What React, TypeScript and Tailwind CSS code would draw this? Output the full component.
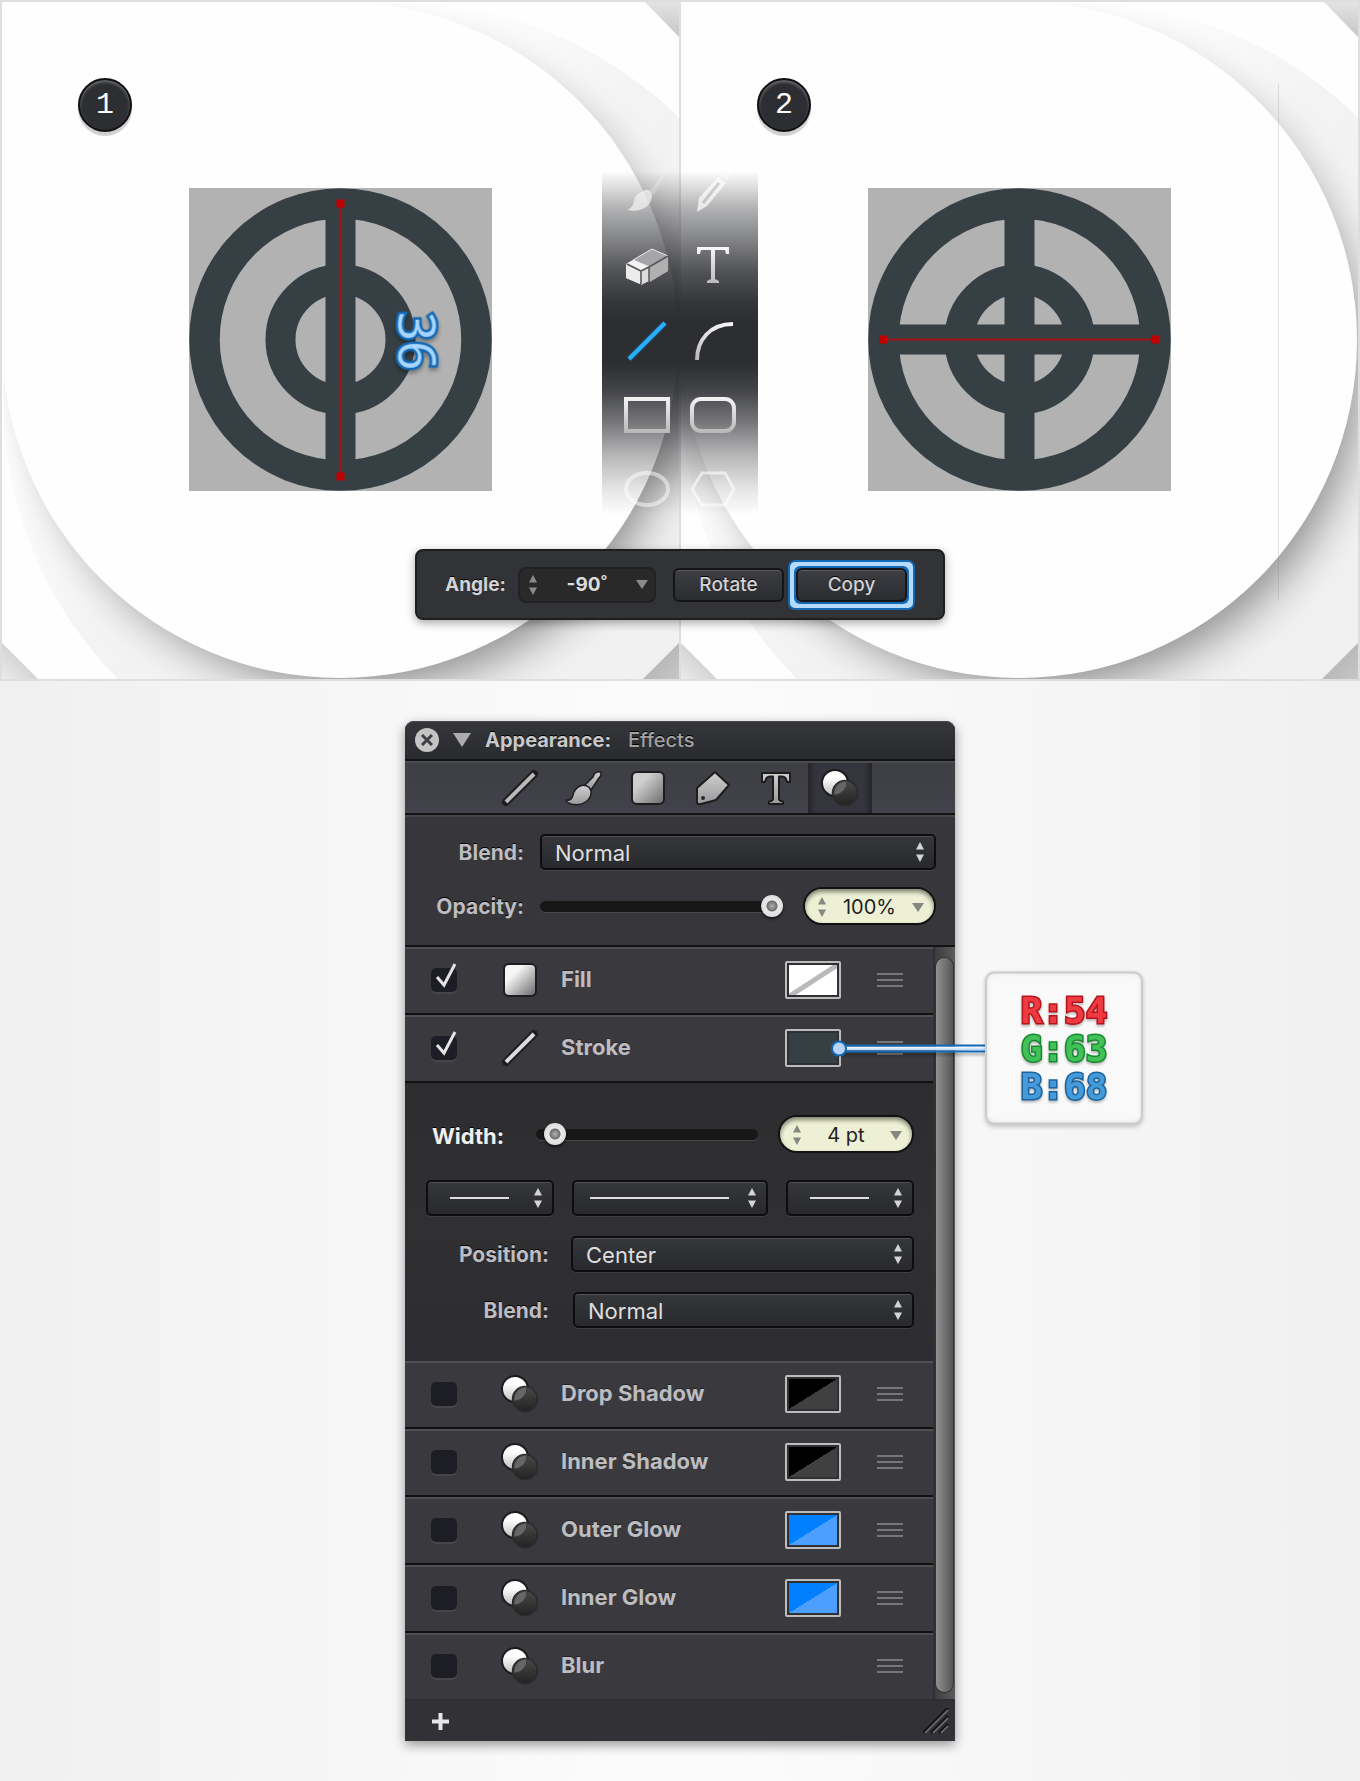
import React, { useState } from "react";

/* ---------- stage drawings ---------- */

function Stage({ id, crosshair }: { id: string; crosshair: boolean }) {
  const dark = "#363f44";
  return (
    <svg viewBox="0 0 677 677" className="block h-auto w-full" aria-hidden="true">
      <defs>
        <clipPath id={id + "-outer"}>
          <circle cx="398" cy="398" r="397" />
        </clipPath>
        <filter id={id + "-blur"} x="-20%" y="-20%" width="140%" height="140%">
          <feGaussianBlur stdDeviation="23" />
        </filter>
        <linearGradient id={id + "-ring"} x1="0" y1="0" x2="1" y2="1">
          <stop offset="0.28" stopColor="#fefefe" />
          <stop offset="0.46" stopColor="#f3f3f3" />
          <stop offset="1" stopColor="#f0f0f0" />
        </linearGradient>
        <linearGradient id={id + "-corner"} x1="0" y1="0" x2="0" y2="1">
          <stop offset="0" stopColor="#e3e3e3" />
          <stop offset="1" stopColor="#c6c6c6" />
        </linearGradient>
        <linearGradient id={id + "-cornerdark"} x1="0" y1="0" x2="1" y2="1">
          <stop offset="0.3" stopColor="#b4b4b4" />
          <stop offset="1" stopColor="#c6c6c6" />
        </linearGradient>
        <linearGradient id={id + "-left"} x1="1" y1="0" x2="0" y2="1">
          <stop offset="0.4" stopColor="#d0d0d0" />
          <stop offset="1" stopColor="#ececec" />
        </linearGradient>
      </defs>
      <rect width="677" height="677" fill="#fefefe" />
      <path d="M643 0H677V35Z" fill={`url(#${id}-corner)`} />
      <path d="M0 641V677H36Z" fill={`url(#${id}-left)`} />
      <g clipPath={`url(#${id}-outer)`}>
        <circle cx="398" cy="398" r="397" fill={`url(#${id}-ring)`} />
        <circle cx="355" cy="362" r="324" fill="#000" opacity="0.42" filter={`url(#${id}-blur)`} />
      </g>
      <path d="M677 641V677H641Z" fill={`url(#${id}-cornerdark)`} />
      <circle cx="338" cy="338" r="338" fill="#fefefe" />
      {crosshair && <path d="M597.5 82V598" stroke="#808080" strokeOpacity="0.22" />}

      <rect x="187" y="186" width="303" height="303" fill="#b2b2b2" />
      <circle cx="338.500" cy="337.500" r="136" fill="none" stroke={dark} strokeWidth="30.500" />
      <circle cx="338.500" cy="337.500" r="60" fill="none" stroke={dark} strokeWidth="30" />
      <path d="M338.500 190V485" stroke={dark} strokeWidth="30" />
      {crosshair ? (
        <g>
          <path d="M190 337.500H487" stroke={dark} strokeWidth="30" />
          <path d="M202 337.500H475" stroke="#a31317" strokeWidth="2" />
          <path d="M198 333.500h8v8h-8zM470 333.500h8v8h-8z" fill="#c00000" />
        </g>
      ) : (
        <g>
          <path d="M338.500 201V474" stroke="#a31317" strokeWidth="2" />
          <path d="M334.500 197.500h8v8h-8zM334.500 470.500h8v8h-8z" fill="#c00000" />
        </g>
      )}
    </svg>
  );
}

function StepBadge({ n }: { n: number }) {
  return (
    <span className="absolute left-[76px] top-[76px] flex size-[54px] items-center justify-center rounded-full border-2 border-[#111114] bg-[#2d2e32] font-['Liberation_Mono'] text-[30px] leading-none text-white shadow-[0_4px_1px_rgba(0,0,0,0.18),inset_0_2px_3px_rgba(255,255,255,0.3)]">
      {n}
    </span>
  );
}

/* ---------- tool palette ---------- */

const palette: { label: string; fade: string; art: React.ReactNode }[] = [
  {
    label: "Brush",
    fade: "opacity-70",
    art: (
      <g fill="#f6f6f6">
        <path d="M45 2 27 23l5 4Z" opacity="0.35" />
        <path d="M21 23c5-3 9 0 9 5 0 10-11 17-25 14 6-3 6-5 7-10 1-4 4-7 9-9Z" />
      </g>
    ),
  },
  {
    label: "Pen",
    fade: "opacity-70",
    art: (
      <g>
        <path d="M9 44 11 30 30 9l8 6-19 23Z" fill="#fff" />
        <path d="M15 35 31 15" stroke="#c9c9cb" strokeWidth="3" />
        <path d="M32 7 37 1l7 5-5 7Z" fill="#fff" opacity="0.5" />
      </g>
    ),
  },
  {
    label: "Eraser",
    fade: "opacity-100",
    art: (
      <g strokeLinejoin="round">
        <path d="m4 22 7-4 18-11 17 7v15L27 39 18 42 4 36Z" fill="#c9c9c9" />
        <path d="m11 18 19-11 16 7-18 11Z" fill="#a5a5a7" stroke="#e6e6e6" strokeWidth="1" />
        <path d="m27 25 19-11v15L28 40Z" fill="#b0b0b1" />
        <path d="m4 22 7-4 16 7-9 4Z" fill="#f4f4f4" />
        <path d="m4 23 14 6v13L4 36Z" fill="#ececec" />
        <path d="m19 29 8-4v14l-8 4Z" fill="#dcdcdc" />
        <path d="m5 22 14 7v13m0-13 8-4V39m0-14 19-11" fill="none" stroke="#55565a" strokeWidth="1.500" />
      </g>
    ),
  },
  {
    label: "Text",
    fade: "opacity-100",
    art: <path d="M9 5H41V12H38L37 8H27V37L31 39V41H19V39L23 37V8H13L12 12H9Z" fill="url(#paletteMetal)" />,
  },
  {
    label: "Line",
    fade: "opacity-100",
    art: (
      <g>
        <path d="M7 43 43 7" stroke="#1478c8" strokeWidth="6" opacity="0.45" />
        <path d="M7 43 43 7" stroke="#29aef7" strokeWidth="4" />
      </g>
    ),
  },
  {
    label: "Arc",
    fade: "opacity-100",
    art: <path d="M9 44C9 24 22 8 45 8" fill="none" stroke="url(#paletteMetal)" strokeWidth="4" />,
  },
  {
    label: "Rectangle",
    fade: "opacity-100",
    art: <rect x="4" y="9" width="42" height="32" fill="none" stroke="url(#paletteMetal)" strokeWidth="4" />,
  },
  {
    label: "Rounded rectangle",
    fade: "opacity-100",
    art: <rect x="4" y="9" width="42" height="32" rx="9" fill="none" stroke="url(#paletteMetal)" strokeWidth="4" />,
  },
  {
    label: "Ellipse",
    fade: "opacity-50",
    art: <ellipse cx="25" cy="25" rx="21" ry="16" fill="none" stroke="#fff" strokeWidth="4" />,
  },
  {
    label: "Polygon",
    fade: "opacity-60",
    art: <path d="M14 9H37L46 25 37 41H14L4 25Z" fill="none" stroke="#fff" strokeWidth="3" />,
  },
];

function ToolPalette() {
  return (
    <div className="absolute left-1/2 top-[154px] grid w-[156px] -translate-x-1/2 grid-cols-2 bg-[linear-gradient(to_bottom,rgba(45,46,50,0)_4%,rgba(45,46,50,0.36)_14%,rgba(45,46,50,0.6)_23%,rgba(45,46,50,0.82)_31%,rgba(45,46,50,0.97)_40%,rgb(45,46,50)_45%,rgb(45,46,50)_56%,rgba(45,46,50,0.9)_63%,rgba(45,46,50,0.65)_72%,rgba(45,46,50,0.34)_81%,rgba(45,46,50,0.12)_90%,rgba(45,46,50,0)_97%)] px-3">
      {palette.map((t) => (
        <button key={t.label} type="button" aria-label={t.label} className="flex h-[74px] items-center justify-center">
          <svg viewBox="0 0 50 50" className={"size-[50px] " + t.fade}>
            {t.art}
          </svg>
        </button>
      ))}
    </div>
  );
}

/* ---------- shared controls ---------- */

function UpDown({ className }: { className: string }) {
  return (
    <svg viewBox="0 0 10 22" className={"pointer-events-none h-[22px] w-[10px] shrink-0 " + className} fill="currentColor" aria-hidden="true">
      <path d="M5 1 9 8.500H1Z" />
      <path d="M5 21 9 13.500H1Z" />
    </svg>
  );
}

function Down({ className }: { className: string }) {
  return (
    <svg viewBox="0 0 12 9" className={"h-[9px] w-3 shrink-0 " + className} fill="currentColor" aria-hidden="true">
      <path d="M0 0H12L6 9Z" />
    </svg>
  );
}

function Select({ id, value, options }: { id: string; value: string; options: string[] }) {
  return (
    <div className="relative flex-1">
      <select
        id={id}
        defaultValue={value}
        className="block h-9 w-full appearance-none rounded-[5px] border-2 border-[#0d0d10] bg-linear-to-b from-[#36373b] to-[#28292d] pt-0.5 pr-10 pl-[13px] text-[22px] leading-7 text-[#dededf] shadow-[0_1px_0_rgba(255,255,255,0.08),inset_0_1px_0_rgba(255,255,255,0.14)]"
      >
        {options.map((o) => (
          <option key={o}>{o}</option>
        ))}
      </select>
      <UpDown className="absolute top-[7px] right-[11px] text-[#d4d4d6]" />
    </div>
  );
}

function LineSelect({ label, grow }: { label: string; grow?: boolean }) {
  return (
    <button
      type="button"
      aria-haspopup="listbox"
      aria-label={label}
      className={
        (grow ? "flex-1 pl-4" : "w-32 pl-[22px]") +
        " flex h-9 items-center rounded-[5px] border-2 border-[#0d0d10] bg-linear-to-b from-[#36373b] to-[#28292d] pr-[9px] shadow-[0_1px_0_rgba(255,255,255,0.08),inset_0_1px_0_rgba(255,255,255,0.14)]"
      }
    >
      <span className={(grow ? "mr-[18px]" : "mr-6") + " h-0.5 flex-1 bg-[#dcdcdd]"} />
      <UpDown className="text-[#d4d4d6]" />
    </button>
  );
}

const sliderClass =
  "h-[22px] min-w-0 flex-1 appearance-none bg-transparent [&::-webkit-slider-runnable-track]:h-[11px] [&::-webkit-slider-runnable-track]:rounded-full [&::-webkit-slider-runnable-track]:bg-[#171718] [&::-webkit-slider-runnable-track]:shadow-[0_1px_0_#48484c] [&::-webkit-slider-thumb]:-mt-[6px] [&::-webkit-slider-thumb]:size-[22px] [&::-webkit-slider-thumb]:appearance-none [&::-webkit-slider-thumb]:rounded-full [&::-webkit-slider-thumb]:bg-[radial-gradient(circle,#b0b0b0_0,#8a8a8a_3px,#6c6c6c_5px,#e9e9e9_6px,#d2d2d2_100%)] [&::-webkit-slider-thumb]:shadow-[0_2px_3px_rgba(0,0,0,0.6)]";

function NumberPill({ id, label, value, width }: { id: string; label: string; value: string; width: string }) {
  return (
    <div
      className={
        width +
        " flex h-[38px] shrink-0 items-center rounded-full border-2 border-[#121212] bg-[#edf0d4] pt-0.5 pr-[10px] pl-3 text-[#868780] shadow-[inset_0_3px_4px_rgba(0,0,0,0.45)]"
      }
    >
      <UpDown className="" />
      <input
        id={id}
        aria-label={label}
        defaultValue={value}
        className="min-w-0 flex-1 bg-transparent text-center text-[20px] leading-6 text-[#1f1f1f] outline-none"
      />
      <Down className="" />
    </div>
  );
}

/* ---------- icons ---------- */

function CirclesIcon() {
  return (
    <svg viewBox="0 0 38 38" className="size-[38px] shrink-0" aria-hidden="true">
      <circle cx="14" cy="14" r="13" fill="url(#whiteBall)" stroke="#1b1b1d" strokeWidth="2" />
      <circle cx="24" cy="24" r="12.500" fill="url(#darkBall)" stroke="#2a2a2b" strokeWidth="1.500" />
      <path d="M13 26A12.500 12.500 0 0 1 26 12 13 13 0 0 1 13 26Z" fill="#666" stroke="#3c3c3c" />
    </svg>
  );
}

function SquareIcon({ bright }: { bright?: boolean }) {
  return (
    <svg viewBox="0 0 38 38" className="size-[38px] shrink-0" aria-hidden="true">
      <rect x="3" y="3" width="32" height="32" rx="5" fill={bright ? "url(#squareBright)" : "url(#squareSoft)"} stroke="#1d1d20" strokeWidth="2" />
    </svg>
  );
}

function LineIcon({ bright }: { bright?: boolean }) {
  return (
    <svg viewBox="0 0 38 38" className="size-[38px] shrink-0" aria-hidden="true">
      <path d="M5 33 33 5" stroke="#1d1d20" strokeWidth="8" strokeLinecap="round" />
      <path d="M5 33 33 5" stroke={bright ? "#dcdcdc" : "#b9b9ba"} strokeWidth="4" />
    </svg>
  );
}

const tabs: { label: string; art: React.ReactNode }[] = [
  { label: "Stroke", art: <LineIcon /> },
  {
    label: "Brushes",
    art: (
      <svg viewBox="0 0 38 38" className="size-[38px]" stroke="#1d1d20" strokeWidth="1.500" strokeLinejoin="round">
        <path d="m20 16 8-8c1-4 4-6 7-5 2 1 1 4-1 6l-2 3-6 9Z" fill="url(#iconMetal)" />
        <path d="M15 17c4-2 10 0 11 5 1 9-9 16-20 13-3-1-5-2-5-4 4 1 6-1 7-5 1-5 3-7 7-9Z" fill="url(#iconMetal)" />
      </svg>
    ),
  },
  { label: "Fill", art: <SquareIcon /> },
  {
    label: "Tag",
    art: (
      <svg viewBox="0 0 38 38" className="size-[38px]" strokeLinejoin="round">
        <path d="M22 3 36 16 23 31l-15 4c-3 1-5-1-4-4V19Z" fill="url(#iconMetal)" stroke="#1d1d20" strokeWidth="2" />
        <circle cx="10" cy="29" r="2" fill="#26272a" />
      </svg>
    ),
  },
  {
    label: "Text",
    art: (
      <svg viewBox="0 0 38 38" className="size-[38px]" strokeLinejoin="round">
        <path
          d="M5 4H33V13H30Q29 7.500 25 7.500H22V30Q22 32 26 32.500V35H12V32.500Q16 32 16 30V7.500H13Q9 7.500 8 13H5Z"
          fill="url(#iconMetal)"
          stroke="#1d1d20"
          strokeWidth="2"
        />
      </svg>
    ),
  },
  { label: "Effects", art: <CirclesIcon /> },
];

/* ---------- layer rows ---------- */

function Swatch({ fill, line }: { fill: string; line?: boolean }) {
  return (
    <button type="button" aria-label="Choose colour" className="block h-[38px] w-14 rounded-[2px] border-2 border-[#bcbcbc] bg-[#2f3033] p-[2px]">
      <span className={"relative block h-full w-full overflow-hidden " + fill}>
        {line && (
          <svg viewBox="0 0 48 30" preserveAspectRatio="none" className="absolute inset-0 h-full w-full" aria-hidden="true">
            <path d="M-1 32 50 -1" stroke="#b9b9b9" strokeWidth="5" />
          </svg>
        )}
      </span>
    </button>
  );
}

function Row({
  name,
  icon,
  swatch,
  checked,
  last,
  children,
}: {
  name: string;
  icon: React.ReactNode;
  swatch?: React.ReactNode;
  checked?: boolean;
  last?: boolean;
  children?: React.ReactNode;
}) {
  const [on, setOn] = useState(!!checked);
  return (
    <li
      className={
        (last ? "h-[66px]" : "h-[68px] border-b-2 border-b-[#111114]") +
        " flex items-center border-t-2 border-t-[#4f4f54] bg-[#3a3a3e] pr-[30px] pb-0.5 pl-[26px]"
      }
    >
      <label className="flex flex-1 items-center text-[22px] leading-7 font-bold text-[#bdbdc1] [text-shadow:0_-1px_0_rgba(0,0,0,0.4)]">
        <span className="relative mr-11 block h-6 w-[26px]">
          <input
            type="checkbox"
            checked={on}
            onChange={() => setOn(!on)}
            className="peer block h-6 w-[26px] appearance-none rounded-[5px] bg-[#1d1e25] shadow-[0_2px_0_#44444a]"
          />
          <svg viewBox="0 0 26 30" className="pointer-events-none absolute bottom-0 left-0 hidden h-[30px] w-[26px] peer-checked:block" aria-hidden="true">
            <path d="M6 15 13 23 24 2" fill="none" stroke="#e4e4e6" strokeWidth="3" />
          </svg>
        </span>
        <span className="mr-[22px] block">{icon}</span>
        <span className="pb-0.5">{name}</span>
      </label>
      {swatch && <div className="relative">{swatch}{children}</div>}
      <button type="button" aria-label={"Reorder " + name} className="ml-9 flex h-[14px] w-[26px] flex-col justify-between">
        <span className="h-0.5 w-full bg-[#77777a]" />
        <span className="h-0.5 w-full bg-[#77777a]" />
        <span className="h-0.5 w-full bg-[#77777a]" />
      </button>
    </li>
  );
}

const outline = "[paint-order:stroke_fill] [filter:drop-shadow(0_2px_1px_rgba(0,0,0,0.25))]";

function ColourCallout() {
  return (
    <div className="absolute top-1/2 left-[46px] z-10 flex -translate-y-1/2 items-center">
      <span className="z-10 size-4 shrink-0 rounded-full border-2 border-[#1268b3] bg-[#b9d5fb]" />
      <span className="-ml-1 h-2 w-[142px] shrink-0 border-y-2 border-[#1268b3] bg-linear-to-b from-white to-[#a9d2fa] shadow-[0_3px_2px_rgba(0,0,0,0.2)]" />
      <div className="flex h-[153px] w-[158px] shrink-0 flex-col items-center justify-center rounded-[9px] border-2 border-[#cbcbcb] bg-[#f9f9f9] font-['DejaVu_Sans_Mono'] text-[36px] leading-[38px] font-bold shadow-[0_2px_4px_rgba(0,0,0,0.2),inset_0_0_4px_rgba(0,0,0,0.12)]">
        <span className={"text-[#ee3a40] [-webkit-text-stroke:3px_#b5161d] " + outline}>R:54</span>
        <span className={"text-[#41c157] [-webkit-text-stroke:3px_#178a30] " + outline}>G:63</span>
        <span className={"text-[#459bd9] [-webkit-text-stroke:3px_#1a639f] " + outline}>B:68</span>
      </div>
    </div>
  );
}

const blends = ["Normal", "Multiply", "Screen", "Overlay"];
const shadowSwatch = "bg-[linear-gradient(to_bottom_right,#000_50%,#404040_50%)]";
const glowSwatch = "bg-[linear-gradient(to_bottom_right,#0080ff_50%,#4d9fff_50%)]";
const labelClass = "shrink-0 pt-0.5 text-right text-[21px] leading-6 font-bold text-[#bdbdc1] [text-shadow:0_-1px_0_#000]";

function AppearancePanel() {
  return (
    <section className="mx-auto my-10 w-full max-w-[550px] rounded-t-[9px] bg-[#323236] shadow-[0_4px_12px_rgba(0,0,0,0.4)]">
      <header className="flex h-10 items-center rounded-t-[9px] border-b-2 border-[#141417] bg-linear-to-b from-[#35363a] to-[#2a2b2e] pl-[10px] shadow-[inset_0_1px_0_#4a4a4e]">
        <button type="button" aria-label="Close panel" className="flex size-6 items-center justify-center rounded-full bg-[#c4c4c5]">
          <svg viewBox="0 0 12 12" className="size-3" aria-hidden="true">
            <path d="M1 1 11 11M11 1 1 11" stroke="#3f4043" strokeWidth="3" />
          </svg>
        </button>
        <button type="button" aria-label="Collapse panel" className="ml-[14px] text-[#acacae]">
          <svg viewBox="0 0 18 14" className="h-[14px] w-[18px]" fill="currentColor" aria-hidden="true">
            <path d="M0 0H18L9 14Z" />
          </svg>
        </button>
        <h2 className="ml-[14px] text-[20px] leading-6 font-bold text-[#c9c9cc] [text-shadow:0_-1px_0_#000]">
          Appearance: <span className="ml-3 font-medium text-[#a2a2a5]">Effects</span>
        </h2>
      </header>

      <div className="flex h-[54px] justify-center border-t-2 border-b-2 border-t-[#4b4c50] border-b-[#131316] bg-linear-to-b from-[#3e3f43] to-[#41424a]">
        {tabs.map((t) => (
          <button
            key={t.label}
            type="button"
            aria-label={t.label}
            className={
              "flex w-16 items-center justify-center " +
              (t.label === "Effects" ? "border-x-2 border-[#26262b] bg-[#35363d] shadow-[inset_5px_0_4px_-3px_#26262b,inset_-5px_0_4px_-3px_#26262b]" : "")
            }
          >
            {t.art}
          </button>
        ))}
      </div>

      <div className="flex h-[132px] flex-col border-t-2 border-b-2 border-t-[#47474b] border-b-[#131316] bg-[#37373b] pt-[17px] pr-[19px]">
        <div className="flex items-center">
          <label htmlFor="blend" className={labelClass + " mr-4 w-[119px]"}>Blend:</label>
          <Select id="blend" value="Normal" options={blends} />
        </div>
        <div className="mt-[17px] flex items-center">
          <label htmlFor="opacity" className={labelClass + " mr-4 w-[119px]"}>Opacity:</label>
          <input id="opacity" type="range" min={0} max={100} defaultValue={100} className={sliderClass} />
          <span className="w-5" />
          <NumberPill id="opacity-value" label="Opacity value" value="100%" width="w-[133px]" />
        </div>
      </div>

      <div className="flex">
        <ul className="min-w-0 flex-1">
          <Row name="Fill" checked icon={<SquareIcon bright />} swatch={<Swatch fill="bg-white" line />} />
          <Row name="Stroke" checked icon={<LineIcon bright />} swatch={<Swatch fill="bg-[#363f44]" />}>
            <ColourCallout />
          </Row>
          <li className="flex flex-col bg-linear-to-b from-[#2d2d30] via-[#303033] to-[#2d2d31] px-[19px] pt-8 pb-[33px] pl-[21px]">
            <div className="mb-[27px] flex items-center">
              <label htmlFor="width" className="w-[110px] shrink-0 pt-1 pl-[6px] text-[22px] leading-7 font-bold text-[#f0f0f1] [text-shadow:0_-1px_0_#000]">Width:</label>
              <input id="width" type="range" min={0} max={100} defaultValue={4} className={sliderClass} />
              <span className="w-5" />
              <NumberPill id="width-value" label="Width value" value="4 pt" width="w-[136px]" />
            </div>
            <div className="mb-5 flex gap-[18px]">
              <LineSelect label="Start arrowhead" />
              <LineSelect label="Dash style" grow />
              <LineSelect label="End arrowhead" />
            </div>
            <div className="mb-5 flex items-center">
              <label htmlFor="position" className={labelClass + " mr-[22px] w-[123px]"}>Position:</label>
              <Select id="position" value="Center" options={["Inside", "Center", "Outside"]} />
            </div>
            <div className="flex items-center">
              <label htmlFor="stroke-blend" className={labelClass + " mr-6 w-[123px]"}>Blend:</label>
              <Select id="stroke-blend" value="Normal" options={blends} />
            </div>
          </li>
          <Row name="Drop Shadow" icon={<CirclesIcon />} swatch={<Swatch fill={shadowSwatch} />} />
          <Row name="Inner Shadow" icon={<CirclesIcon />} swatch={<Swatch fill={shadowSwatch} />} />
          <Row name="Outer Glow" icon={<CirclesIcon />} swatch={<Swatch fill={glowSwatch} />} />
          <Row name="Inner Glow" icon={<CirclesIcon />} swatch={<Swatch fill={glowSwatch} />} />
          <Row name="Blur" icon={<CirclesIcon />} last />
        </ul>
        <div className="flex w-[22px] shrink-0 border-l-2 border-[#313134] bg-linear-to-r from-[#3c3c3d] to-[#5c5c5d] pt-[11px] pr-[2px] pb-[7px] pl-px">
          <div className="flex-1 rounded-full bg-linear-to-r from-[#929292] to-[#565656] shadow-[0_0_0_1px_#313133]" />
        </div>
      </div>

      <footer className="flex h-[42px] items-center justify-between border-t-2 border-[#2f2f33] bg-[#323236] pr-[6px] pl-[27px]">
        <button type="button" aria-label="Add effect">
          <svg viewBox="0 0 17 17" className="size-[17px]" aria-hidden="true">
            <path d="M8.500 0V17M0 8.500H17" stroke="#e6e6ea" strokeWidth="4" />
          </svg>
        </button>
        <svg viewBox="0 0 26 26" className="size-[26px]" aria-hidden="true">
          <path d="M0 25 25 0M8 25 25 8M16 25 25 16" stroke="#17171a" strokeWidth="3" />
          <path d="M2 25 25 2M10 25 25 10M18 25 25 18" stroke="#737377" strokeWidth="1.500" />
        </svg>
      </footer>
    </section>
  );
}

/* ---------- angle bar ---------- */

const barButton =
  "flex-1 h-[34px] rounded-md border-2 border-[#151518] bg-linear-to-b from-[#3e3f44] to-[#2b2c30] text-[19px] leading-6 font-medium text-[#d3d3d5] shadow-[inset_0_1px_0_rgba(255,255,255,0.14)] [text-shadow:0_-1px_0_#000]";

function AngleBar() {
  return (
    <div className="absolute top-[547px] left-1/2 flex h-[71px] w-[530px] -translate-x-1/2 items-center rounded-lg border-2 border-[#1e1e21] bg-[#323337] px-7 shadow-[0_3px_10px_rgba(0,0,0,0.35)]">
      <label htmlFor="angle" className="w-[73px] text-[19px] leading-6 font-bold text-[#d3d3d5] [text-shadow:0_-1px_0_#000]">Angle:</label>
      <div className="flex h-9 w-[138px] items-center rounded-lg border-2 border-[#222224] bg-[#29292a] pr-[6px] pl-2 text-[#8b8b8d]">
        <UpDown className="" />
        <input id="angle" defaultValue="-90˚" className="min-w-0 flex-1 bg-transparent text-center text-[19px] leading-6 font-bold text-[#dcdcdc] outline-none" />
        <Down className="" />
      </div>
      <div className="ml-[17px] flex flex-1 items-center">
        <button type="button" className={barButton}>Rotate</button>
        <div className="ml-1 flex w-[127px] rounded-[7px] border-2 border-[#1268b3] bg-[#b4dbff] p-1">
          <div className="flex flex-1 rounded-md bg-[#1268b3] p-[2px]">
            <button type="button" className={barButton}>Copy</button>
          </div>
        </div>
      </div>
    </div>
  );
}

export default function App() {
  return (
    <main className="min-h-screen bg-[linear-gradient(to_right,#f0f0f0,#fbfbfb_45%,#fbfbfb_55%,#f0f0f0)] font-['Inter',sans-serif]">
      <svg className="absolute size-0" aria-hidden="true">
        <defs>
          <linearGradient id="paletteMetal" gradientUnits="userSpaceOnUse" x1="0" y1="5" x2="0" y2="45">
            <stop offset="0" stopColor="#f8f8f8" />
            <stop offset="1" stopColor="#b4b4b5" />
          </linearGradient>
          <linearGradient id="iconMetal" x1="0" y1="0" x2="0" y2="1">
            <stop offset="0" stopColor="#d0d0d1" />
            <stop offset="1" stopColor="#9a9a9c" />
          </linearGradient>
          <linearGradient id="squareSoft" x1="0" y1="0" x2="1" y2="1">
            <stop offset="0.3" stopColor="#cfcfd0" />
            <stop offset="1" stopColor="#6b6b6d" />
          </linearGradient>
          <linearGradient id="squareBright" x1="0" y1="0" x2="1" y2="1">
            <stop offset="0.3" stopColor="#f6f6f6" />
            <stop offset="1" stopColor="#666668" />
          </linearGradient>
          <linearGradient id="whiteBall" x1="0" y1="0" x2="0" y2="1">
            <stop offset="0.3" stopColor="#ffffff" />
            <stop offset="1" stopColor="#bcbcbc" />
          </linearGradient>
          <linearGradient id="darkBall" x1="0" y1="0" x2="0" y2="1">
            <stop offset="0" stopColor="#4a4a4b" />
            <stop offset="1" stopColor="#222223" />
          </linearGradient>
        </defs>
      </svg>

      <section className="relative grid grid-cols-2 border-2 border-[#dedede]">
        <div className="relative border-r border-[#dedede]">
          <Stage id="first" crosshair={false} />
          <StepBadge n={1} />
          <span className="absolute top-[339px] left-[416px] -translate-x-1/2 -translate-y-1/2 rotate-90 font-['Noto_Sans'] text-[51px] leading-none text-[#a6d5ff] [-webkit-text-stroke:5px_#1268b3] [filter:drop-shadow(3px_0_2px_rgba(0,0,0,0.35))] [paint-order:stroke_fill]">
            36
          </span>
        </div>
        <div className="relative border-l border-[#dedede]">
          <Stage id="second" crosshair />
          <StepBadge n={2} />
        </div>
        <ToolPalette />
        <AngleBar />
      </section>

      <AppearancePanel />
    </main>
  );
}
